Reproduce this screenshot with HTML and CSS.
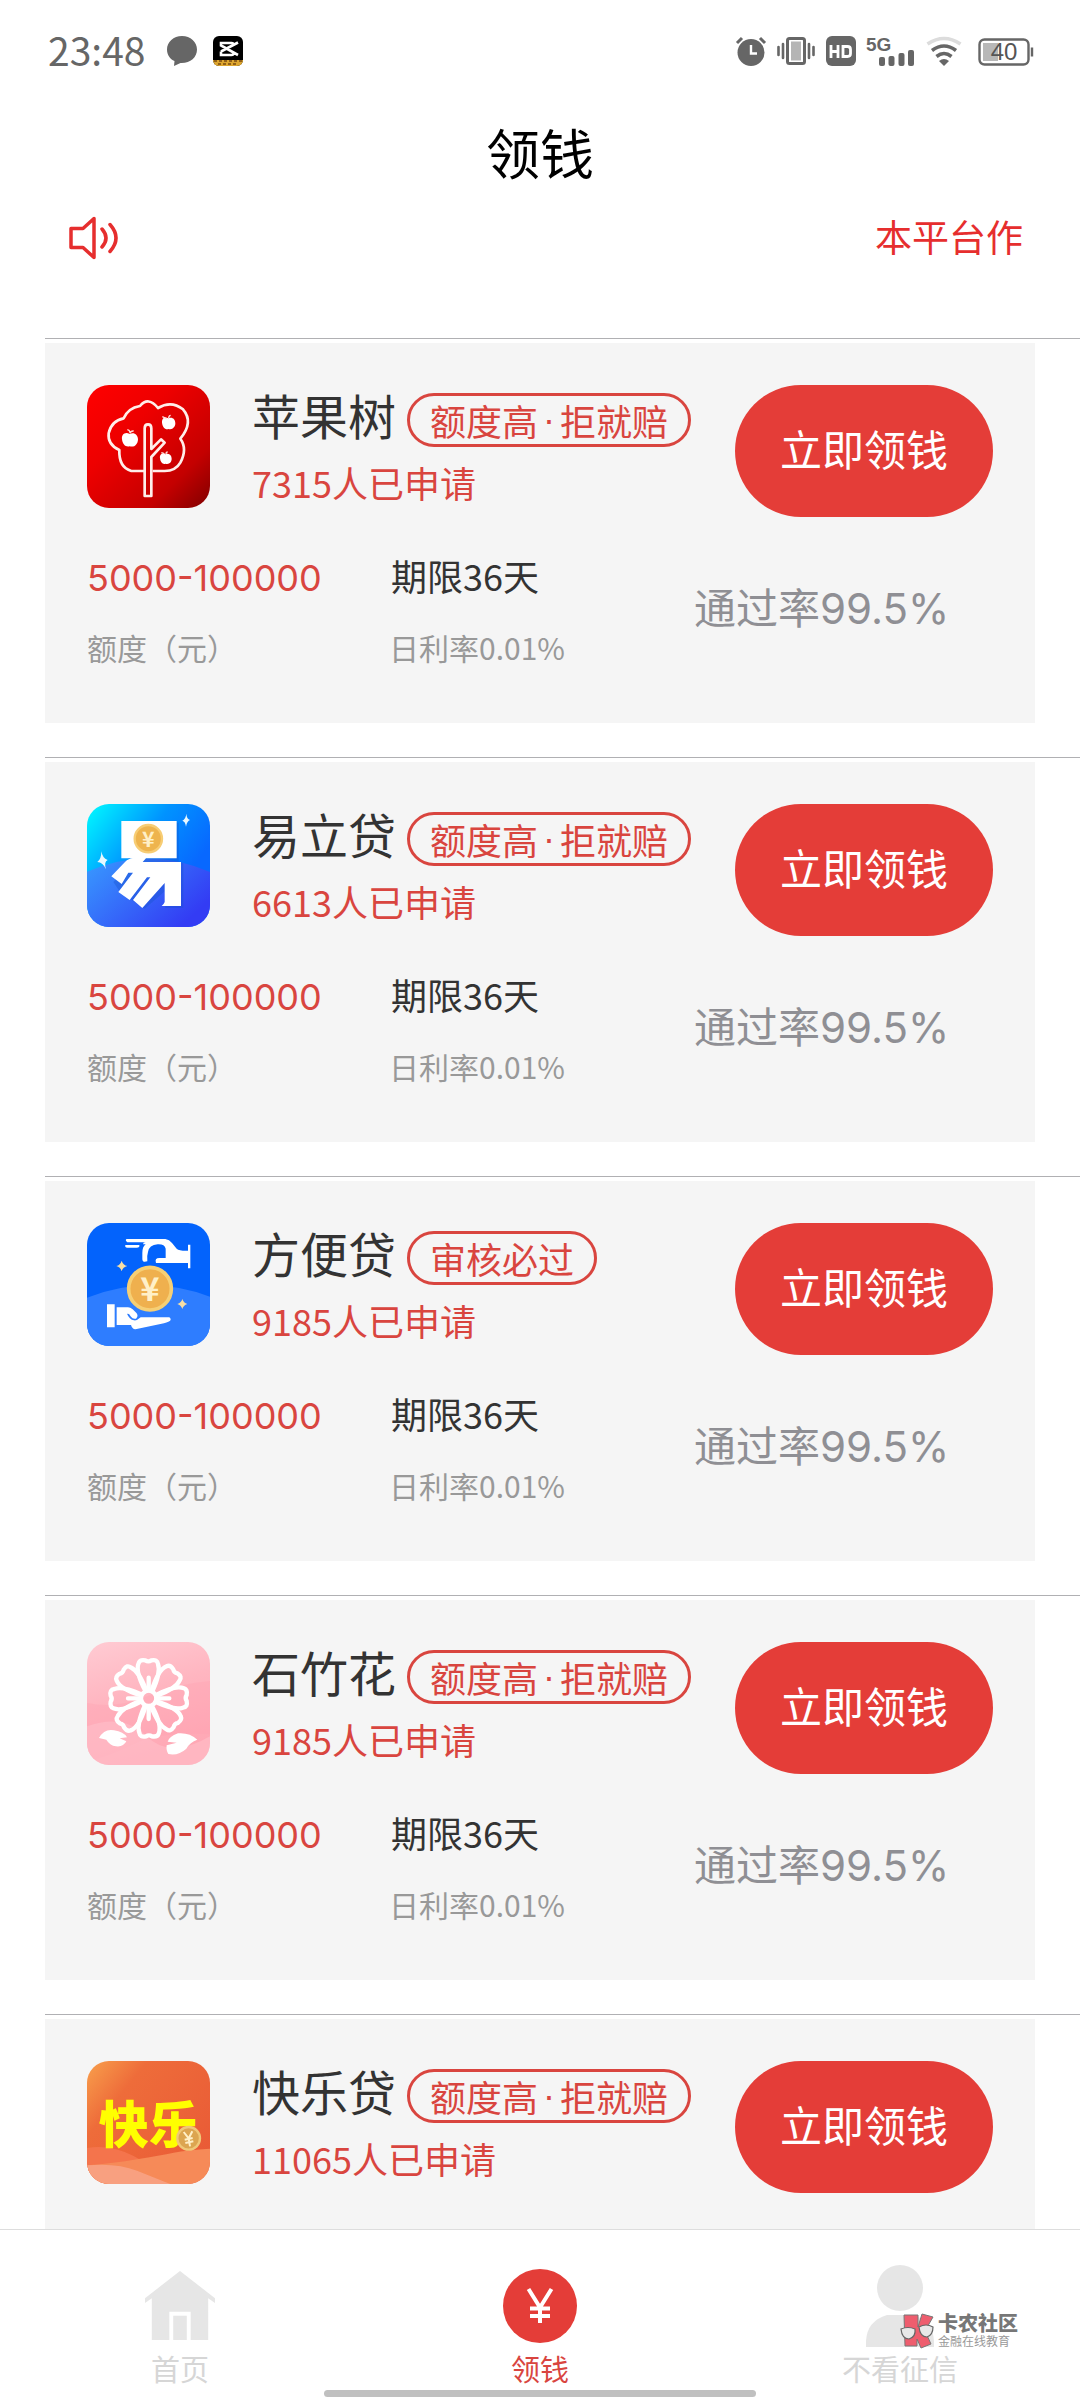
FILE: index.html
```html
<!DOCTYPE html>
<html lang="zh-CN">
<head>
<meta charset="utf-8">
<meta name="viewport" content="width=device-width, initial-scale=1">
<title>领钱</title>
<link rel="stylesheet" href="styles.css">
</head>
<body>
<div class="app">
  <div class="status">
    <div class="status-left">
      <span class="time">23:48</span>
      <svg width="30" height="30" viewBox="0 0 30 30"><path d="M15 0C6.500 0 0 6 0 13.500c0 5.500 3 9.500 7.500 11.500l-.5 5 6.500-3C23 27.500 30 21.500 30 13.500 30 6 23.500 0 15 0z" fill="#666"/></svg>
      <svg width="30" height="30" viewBox="0 0 30 30"><rect width="30" height="30" rx="6" fill="#000"/><path d="M0 24h30a6 6 0 0 1-6 6H6a6 6 0 0 1-6-6z" fill="#dda52e"/><path d="M1 25h28M5 28h20" stroke="#7a4a10" stroke-width="1.500" stroke-dasharray="3 2"/><path d="M25 6.500L8 15.500M25 19L8 9.500V7h10.500q2 0 2 2M8 15.500V19h10.500q2 0 2-2" fill="none" stroke="#fff" stroke-width="2.600"/></svg>
    </div>
    <div class="status-right">
      <svg width="30" height="30" viewBox="0 0 30 30"><circle cx="15" cy="16.500" r="13.500" fill="#666"/><path d="M1 7l5-5M29 7l-5-5" stroke="#666" stroke-width="3"/><path d="M15 9v8.500h6" fill="none" stroke="#fff" stroke-width="2.400"/></svg>
      <svg width="38" height="30" viewBox="0 0 38 30"><rect x="10.500" y="2.500" width="17" height="25" rx="2" fill="#fff" stroke="#666" stroke-width="3"/><rect x="14" y="5.500" width="10" height="19" fill="#b5b5b5"/><path d="M6 8v14M32 8v14M1.500 11v8M36.500 11v8" stroke="#666" stroke-width="2.600" stroke-linecap="round"/></svg>
      <svg width="30" height="30" viewBox="0 0 30 30"><rect width="30" height="30" rx="6" fill="#666"/><path d="M5 9v13M12 9v13M5 15.500h7M17 10.500h4.500q3 0 3 3v4q0 3-3 3H17z" fill="none" stroke="#fff" stroke-width="2.800"/></svg>
      <svg width="48" height="32" viewBox="0 0 48 32"><text x="-1" y="16" class="net">5G</text><g fill="#666"><rect x="12" y="22" width="6" height="9" rx="2"/><rect x="21.500" y="21" width="6" height="10" rx="2"/><rect x="31.500" y="18" width="6" height="13" rx="2"/><rect x="41" y="15" width="6" height="16" rx="2"/></g></svg>
      <svg width="36" height="30" viewBox="0 0 36 30"><g fill="none" stroke-width="3.600"><path d="M1.500 8Q18-3 34.500 8" stroke="#dcdcdc"/><path d="M6 14.500q12-9 24 0M10.500 20.500q7.500-6 15 0" stroke="#666"/></g><path d="M13 25q5-4 10 0l-5 5z" fill="#666"/></svg>
      <svg class="battery" width="56" height="30" viewBox="0 0 56 30"><rect x="1.500" y="3.500" width="49" height="25" rx="5" fill="#fff" stroke="#666" stroke-width="2.400"/><path d="M5 7h15v18H5z" fill="#b8b8b8"/><path d="M54 11.500v9" stroke="#666" stroke-width="2.400"/><text x="26" y="24" class="charge">40</text></svg>
    </div>
  </div>

  <h1 class="title">领钱</h1>

  <div class="notice">
    <svg width="52" height="44" viewBox="0 0 52 44"><path d="M3 12.500h12L26 2.500v39L15 31.500H3zM34 13q8 9 0 18M42 8.500q12 13.500 0 27" fill="none" stroke="#e62e2e" stroke-width="3.500" stroke-linejoin="round" stroke-linecap="round"/></svg>
    <span class="marquee">本平台作</span>
  </div>

  <main class="list">
    <section class="item"><div class="card">
      <div class="top">
        <svg class="logo" viewBox="51 47 369 369">
          <defs><linearGradient id="red" x1="0" y1="0" x2="1" y2="1"><stop offset="0" stop-color="#ff0000"/><stop offset=".35" stop-color="#ee0000"/><stop offset=".75" stop-color="#c40000"/><stop offset="1" stop-color="#800000"/></linearGradient></defs>
          <rect x="51" y="47" width="369" height="369" fill="url(#red)"/>
          <g fill="none" stroke="#ffeeea" stroke-width="8" stroke-linejoin="round"><path d="M222 305H184Q146 294 148 242Q112 225 116 192Q124 154 161 147Q174 116 210 110Q235 80 264 116Q304 92 339 120Q372 158 331 208Q353 238 331 280Q317 305 284 305H248"/><path d="M224 380V177q0-12 10-12t10 12v62l29-29 11 10-40 43v117z"/></g>
          <g fill="#fff"><path d="M179 194c-14-8-25 2-23 16 2 16 11 24 23 21 15 4 24-7 25-20 0-16-13-24-25-17z"/><path d="M295 147c-12-7-20 1-19 13 2 14 9 22 20 19 12 3 20-6 20-17 0-13-10-20-21-15z"/><path d="M287 255c-10-6-19 1-17 12 1 12 8 19 17 16 11 3 18-5 18-15s-8-18-18-13z"/></g>
          <path d="M180 192q2-8 11-7M180 190q-1-8-8-9M296 146q1-8 6-8M290 148q-4-2-13-6M288 254q0-6 5-6M283 254q-3-3-9-4" fill="none" stroke="#ffe0dc" stroke-width="4"/>
        </svg>
        <div class="info"><div class="name-row"><h2 class="name">苹果树</h2><span class="tag">额度高<span class="dot">·</span>拒就赔</span></div><p class="count">7315人已申请</p></div>
        <button class="apply" type="button">立即领钱</button>
      </div>
      <div class="stats"><div><p class="amount">5000-100000</p><p class="hint">额度（元）</p></div><div><p class="term">期限36天</p><p class="hint">日利率0.01%</p></div><p class="pass">通过率99.5%</p></div>
    </div></section>

    <section class="item"><div class="card">
      <div class="top">
        <svg class="logo" viewBox="51 42 369 369">
          <defs><linearGradient id="cyan" x1="0" y1="0" x2=".8" y2=".6"><stop offset="0" stop-color="#00fcff"/><stop offset=".55" stop-color="#0093ff"/><stop offset="1" stop-color="#0868ff"/></linearGradient><linearGradient id="hill" x1="0" y1="0" x2="1" y2=".6"><stop offset="0" stop-color="#389bff"/><stop offset="1" stop-color="#333cf4"/></linearGradient></defs>
          <rect x="51" y="42" width="369" height="369" fill="url(#cyan)"/><path d="M51 245Q235 165 420 246V411H51z" fill="url(#hill)"/>
          <path d="M160 98h166v116l14 6v134h-54v-52l-62 54-30-20-44-30-20-30 48-50z" fill="#1550c8" opacity=".35"/>
          <path d="M154 93h166v112h-92l-10 11h115v132h-58q6-4 9-12v-57l-67 75-28-24 52-68h-10l-52 68-34-24 44-58h-14l-20 34-31-23 41-43q13-13 27-11h-38z" fill="#fff"/>
          <circle cx="235" cy="146" r="41" fill="#eeb44e" stroke="#f7cd74" stroke-width="7"/><text x="235" y="170" class="coin coin-big">¥</text>
          <path d="M349 71q1 16 11 19-9 3-12 20-2-16-11-18 10-4 12-21zM94 184q3 20 19 26-12 5-5 28-9-21-26-22 12-8 12-32z" fill="#e8f8ff"/>
        </svg>
        <div class="info"><div class="name-row"><h2 class="name">易立贷</h2><span class="tag">额度高<span class="dot">·</span>拒就赔</span></div><p class="count">6613人已申请</p></div>
        <button class="apply" type="button">立即领钱</button>
      </div>
      <div class="stats"><div><p class="amount">5000-100000</p><p class="hint">额度（元）</p></div><div><p class="term">期限36天</p><p class="hint">日利率0.01%</p></div><p class="pass">通过率99.5%</p></div>
    </div></section>

    <section class="item"><div class="card">
      <div class="top">
        <svg class="logo" viewBox="51 54 369 369">
          <rect x="51" y="54" width="369" height="369" fill="#0363fc"/><path d="M51 278Q235 205 420 275V423H51z" fill="#2e7dff"/>
          <path d="M170 102h116q12 2 20 12l14 17q8 7 34 6V119h7v71h-7v-16h-96q-5-15 10-15h19v-28q-3-14-24-13-26 2-29 23-4 12-2 28-15 5-15-7v-18q0-19 10-26h-8q0-6 8-6H172q-8-7-2-10zM166 120h42q2 8-8 8h-28q-8 0-6-8z" fill="#fff"/>
          <path d="M111 298h23v69h-23zM140 307h34q7 0 14 6l12 12q6 9-2 16-10 2-15-6l-6-8-6-1q7 17 21 20 8 2 20-9h86q5 3 4 8-4 6-20 10l-82 17q-13 3-17-12h-43z" fill="#fff"/>
          <circle cx="240" cy="251" r="64" fill="#efb04e" stroke="#f6cf75" stroke-width="11"/><text x="240" y="287" class="coin coin-huge">¥</text>
          <path d="M155 167q4 13 17 16-13 3-17 16-4-13-16-16 12-3 16-16zM337 282q4 12 15 15-12 4-15 15-4-12-15-15 12-4 15-15z" fill="#f8dfa5"/>
        </svg>
        <div class="info"><div class="name-row"><h2 class="name">方便贷</h2><span class="tag">审核必过</span></div><p class="count">9185人已申请</p></div>
        <button class="apply" type="button">立即领钱</button>
      </div>
      <div class="stats"><div><p class="amount">5000-100000</p><p class="hint">额度（元）</p></div><div><p class="term">期限36天</p><p class="hint">日利率0.01%</p></div><p class="pass">通过率99.5%</p></div>
    </div></section>

    <section class="item"><div class="card">
      <div class="top">
        <svg class="logo" viewBox="51 47 369 369">
          <defs><linearGradient id="pink" x1="0" y1="0" x2=".3" y2="1"><stop offset="0" stop-color="#ffcbd3"/><stop offset=".5" stop-color="#ffb5c0"/><stop offset="1" stop-color="#ffa8b5"/></linearGradient>
          <path id="petal" d="M226 193q-31-58-20-83 4-11 20-8 9 6 18 0 18-4 20 11 9 25-16 80"/></defs>
          <rect x="51" y="47" width="369" height="369" fill="url(#pink)"/><path d="M51 230q90 18 180-20t189-46v160q-150-10-230 30T51 405z" fill="#ff9eae" opacity=".3"/><path d="M51 300Q160 260 230 330T420 330V416H51z" fill="#ffc4cd" opacity=".5"/>
          <g fill="none" stroke="#fff" stroke-width="13" stroke-linejoin="round" stroke-linecap="round">
            <use href="#petal"/><use href="#petal" transform="rotate(45 236 216)"/><use href="#petal" transform="rotate(90 236 216)"/><use href="#petal" transform="rotate(135 236 216)"/><use href="#petal" transform="rotate(180 236 216)"/><use href="#petal" transform="rotate(225 236 216)"/><use href="#petal" transform="rotate(270 236 216)"/><use href="#petal" transform="rotate(315 236 216)"/>
            <circle cx="236" cy="216" r="23"/><path d="M236 154v38M236 240v38M174 216h38M260 216h38"/>
          </g>
          <path d="M87 335Q103 306 132 312 161 316 171 333L149 336 169 345Q160 363 138 360 119 357 109 340zM382 340Q358 318 324 321 297 331 293 346L320 349 290 357Q288 373 295 383 325 389 349 367 360 347 382 340z" fill="#fff"/>
        </svg>
        <div class="info"><div class="name-row"><h2 class="name">石竹花</h2><span class="tag">额度高<span class="dot">·</span>拒就赔</span></div><p class="count">9185人已申请</p></div>
        <button class="apply" type="button">立即领钱</button>
      </div>
      <div class="stats"><div><p class="amount">5000-100000</p><p class="hint">额度（元）</p></div><div><p class="term">期限36天</p><p class="hint">日利率0.01%</p></div><p class="pass">通过率99.5%</p></div>
    </div></section>

    <section class="item"><div class="card">
      <div class="top">
        <svg class="logo" viewBox="51 59 369 369">
          <defs><linearGradient id="orange" x1="0" y1="0" x2="1" y2=".8"><stop offset="0" stop-color="#f8a04c"/><stop offset=".3" stop-color="#ee6c3a"/><stop offset="1" stop-color="#e95a36"/></linearGradient></defs>
          <rect x="51" y="59" width="369" height="369" fill="url(#orange)"/><path d="M51 320q70-12 140 24t110 84H51z" fill="#f4744c"/><path d="M51 372q80-6 150-18t110-20 109-12V428H51z" fill="#f68a58"/><path d="M51 372q90-8 150 16t100 40H51z" fill="#f8a080"/>
          <text x="86" y="306" class="logo-text">快乐</text>
          <circle cx="356" cy="291" r="34" fill="#dca550" stroke="#efc878" stroke-width="7"/><path d="M341 272l15 19 11-21M356 291l4 24M344 295l24-5M346 305l24-5" fill="none" stroke="#fff0c8" stroke-width="6"/>
        </svg>
        <div class="info"><div class="name-row"><h2 class="name">快乐贷</h2><span class="tag">额度高<span class="dot">·</span>拒就赔</span></div><p class="count">11065人已申请</p></div>
        <button class="apply" type="button">立即领钱</button>
      </div>
    </div></section>
  </main>

  <nav class="tabs">
    <a class="tab" href="#home"><span class="tab-icon"><svg width="70" height="70" viewBox="0 0 72 72"><path d="M36 0L72 28v5l-7-5v43H47V42H25v29H7V28l-7 5v-5z" fill="#e6e6e6"/><path d="M29 46h14v25H29z" fill="#e6e6e6"/></svg></span>首页</a>
    <a class="tab active" href="#money"><span class="tab-icon"><svg width="74" height="74" viewBox="0 0 74 74"><circle cx="37" cy="37" r="37" fill="#e43d38"/><path d="M25.500 20L37 38.500 48.500 20M37 38v16M27 39.500h20M27 47h20" fill="none" stroke="#fff" stroke-width="4"/></svg></span>领钱</a>
    <a class="tab" href="#credit"><span class="tab-icon"><svg width="70" height="82" viewBox="0 0 70 82"><circle cx="35" cy="23" r="23" fill="#e6e6e6"/><path d="M1 82V76Q2 56 22 50h26q20 6 21 26v6z" fill="#e6e6e6"/></svg></span>不看征信</a>
    <div class="mark">
      <svg width="36" height="36" viewBox="0 0 36 36"><path d="M5 2h14v12l4-13 11 3-8 14 6 13-10 4-4-9v7H6z" fill="#ee5d6e" stroke="#777" stroke-width="1"/><path d="M2 16q7-3 14 0 1 8-6 10-7 0-8-10zM20 14q7-4 14 0 0 8-6 10-7 0-8-10z" fill="#e8e8e8" stroke="#666" stroke-width="1.200"/></svg>
      <div><div class="mark-name">卡农社区</div><div class="mark-sub">金融在线教育</div></div>
    </div>
    <div class="home-bar"></div>
  </nav>
</div>
</body>
</html>
```
FILE: styles.css
```css
* { box-sizing: border-box; margin: 0; padding: 0; }
body { background: #fff; color: #333; font-family: "Noto Sans CJK SC", sans-serif; font-weight: 400; }
svg { display: block; flex: none; }
.app { display: flex; flex-direction: column; height: 100vh; overflow: hidden; }

.status { display: flex; justify-content: space-between; align-items: center; flex: none; height: 102px; padding: 0 46px 0 48px; }
.status svg { overflow: visible; }
.status-left, .status-right { display: flex; align-items: center; }
.status-left { gap: 16px; }
.status-right { gap: 11px; }
.time { margin-right: 6px; padding-bottom: 4px; font-size: 39px; line-height: 60px; color: #666; }
.battery { margin-left: 5px; }
.net { font: 700 19px "Liberation Sans", sans-serif; fill: #666; }
.charge { font: 400 24px "Liberation Sans", sans-serif; fill: #555; text-anchor: middle; }

.title { flex: none; padding-bottom: 4px; font-size: 54px; font-weight: 400; line-height: 100px; text-align: center; color: #000; }

.notice { display: flex; justify-content: space-between; align-items: center; flex: none; height: 64px; margin-bottom: 68px; padding: 0 57px 0 68px; }
.marquee { padding-bottom: 4px; font-size: 37px; line-height: 60px; color: #e62e2e; }

.list { flex: 1; min-height: 0; overflow: hidden; padding-left: 45px; }
.item { padding-top: 4px; margin-bottom: 34px; border-top: 1px solid #b0b0b3; }
.card { min-height: 380px; margin-right: 45px; padding: 42px; background: #f5f5f5; }
.top { display: flex; align-items: flex-start; }
.logo { width: 123px; height: 123px; margin-right: 42px; border-radius: 22px; }
.info { flex: 1; }
.name-row { display: flex; align-items: flex-end; gap: 11px; height: 62px; }
.name { font-size: 48px; font-weight: 400; line-height: 66px; white-space: nowrap; }
.tag { display: flex; height: 54px; padding: 0 20px; border: 3px solid #d9453f; border-radius: 27px; font-size: 36px; line-height: 48px; color: #d9453f; white-space: nowrap; }
.dot { width: 22px; font-family: "Liberation Sans", sans-serif; text-align: center; }
.count { margin-top: 5px; font-size: 36px; line-height: 60px; color: #d9453f; }
.apply { flex: none; width: 258px; height: 132px; padding-bottom: 6px; border: 0; border-radius: 66px; background: #e43d38; color: #fff; font: 400 42px/60px "Noto Sans CJK SC", sans-serif; }
.stats { display: grid; grid-template-columns: 1fr 1fr 1fr; margin-top: 28px; white-space: nowrap; }
.amount, .term { height: 60px; font-size: 36px; line-height: 60px; }
.term { padding-left: 2px; }
.amount { font-family: Inter, "Noto Sans CJK SC", sans-serif; line-height: 66px; color: #d9453f; }
.hint { margin-top: 12px; font-size: 30px; line-height: 60px; color: #999; }
.pass { padding: 34px 0 0 3px; font-family: Inter, "Noto Sans CJK SC", sans-serif; font-size: 42px; line-height: 60px; color: #8f8f94; }

.coin { font-family: "Noto Sans CJK SC", sans-serif; font-weight: 700; fill: #fff0c8; text-anchor: middle; }
.coin-big { font-size: 64px; }
.coin-huge { font-size: 98px; }
.logo-text { font-family: "Noto Sans CJK SC", sans-serif; font-size: 150px; font-weight: 900; fill: #ffff00; }

.tabs { position: relative; display: flex; flex: none; height: 171px; padding-top: 35px; border-top: 1px solid #ddd; background: #fff; }
.tab { flex: 1; display: flex; flex-direction: column; align-items: center; gap: 1px; font-size: 29px; line-height: 40px; color: #d6d6d6; text-decoration: none; }
.tab.active { color: #d9453f; }
.tab-icon { display: flex; align-items: center; height: 82px; }
.mark { position: absolute; right: 62px; bottom: 51px; display: flex; gap: 3px; color: #777; white-space: nowrap; }
.mark-name { font-size: 20px; font-weight: 900; line-height: 20px; }
.mark-sub { font-size: 12px; line-height: 16px; color: #999; }
.home-bar { position: absolute; left: 30%; right: 30%; bottom: 3px; height: 7px; border-radius: 4px; background: #c0c0c0; }
```
